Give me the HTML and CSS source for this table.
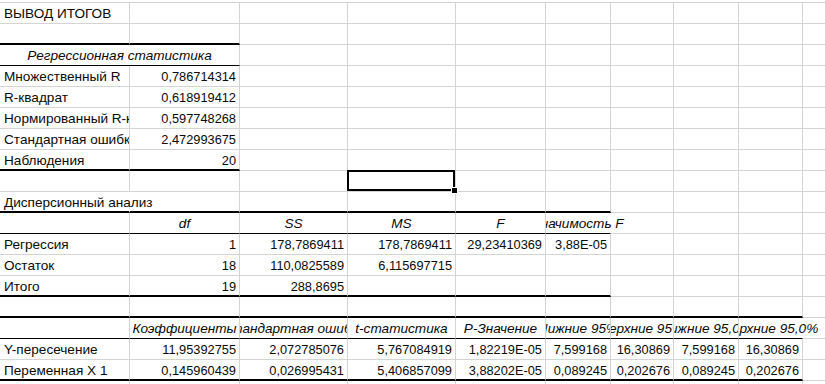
FILE: index.html
```html
<!DOCTYPE html>
<html lang="ru">
<head>
<meta charset="utf-8">
<title>Вывод итогов</title>
<link rel="stylesheet" href="styles.css">
</head>
<body>
<div class="sheet">
  <div class="row">
    <div class="c">ВЫВОД ИТОГОВ</div><div class="c"></div><div class="c"></div><div class="c"></div><div class="c"></div><div class="c"></div><div class="c"></div><div class="c"></div><div class="c"></div><div class="c"></div>
  </div>
  <div class="row">
    <div class="c tb"></div><div class="c tb"></div><div class="c"></div><div class="c"></div><div class="c"></div><div class="c"></div><div class="c"></div><div class="c"></div><div class="c"></div><div class="c"></div>
  </div>
  <div class="row">
    <div class="c m i bb span2">Регрессионная статистика</div><div class="c"></div><div class="c"></div><div class="c"></div><div class="c"></div><div class="c"></div><div class="c"></div><div class="c"></div><div class="c"></div>
  </div>
  <div class="row">
    <div class="c">Множественный R</div><div class="c r">0,786714314</div><div class="c"></div><div class="c"></div><div class="c"></div><div class="c"></div><div class="c"></div><div class="c"></div><div class="c"></div><div class="c"></div>
  </div>
  <div class="row">
    <div class="c">R-квадрат</div><div class="c r">0,618919412</div><div class="c"></div><div class="c"></div><div class="c"></div><div class="c"></div><div class="c"></div><div class="c"></div><div class="c"></div><div class="c"></div>
  </div>
  <div class="row">
    <div class="c">Нормированный R-квадрат</div><div class="c r">0,597748268</div><div class="c"></div><div class="c"></div><div class="c"></div><div class="c"></div><div class="c"></div><div class="c"></div><div class="c"></div><div class="c"></div>
  </div>
  <div class="row">
    <div class="c">Стандартная ошибка</div><div class="c r">2,472993675</div><div class="c"></div><div class="c"></div><div class="c"></div><div class="c"></div><div class="c"></div><div class="c"></div><div class="c"></div><div class="c"></div>
  </div>
  <div class="row">
    <div class="c tb">Наблюдения</div><div class="c r tb">20</div><div class="c"></div><div class="c"></div><div class="c"></div><div class="c"></div><div class="c"></div><div class="c"></div><div class="c"></div><div class="c"></div>
  </div>
  <div class="row">
    <div class="c"></div><div class="c"></div><div class="c"></div><div class="c sel"></div><div class="c"></div><div class="c"></div><div class="c"></div><div class="c"></div><div class="c"></div><div class="c"></div>
  </div>
  <div class="row">
    <div class="c tb spill">Дисперсионный анализ</div><div class="c tb"></div><div class="c tb"></div><div class="c tb"></div><div class="c tb"></div><div class="c tb"></div><div class="c"></div><div class="c"></div><div class="c"></div><div class="c"></div>
  </div>
  <div class="row">
    <div class="c bb"></div><div class="c m i bb">df</div><div class="c m i bb">SS</div><div class="c m i bb">MS</div><div class="c m i bb">F</div><div class="c m i bb spill-c">Значимость F</div><div class="c"></div><div class="c"></div><div class="c"></div><div class="c"></div>
  </div>
  <div class="row">
    <div class="c">Регрессия</div><div class="c r">1</div><div class="c r">178,7869411</div><div class="c r">178,7869411</div><div class="c r">29,23410369</div><div class="c r">3,88E-05</div><div class="c"></div><div class="c"></div><div class="c"></div><div class="c"></div>
  </div>
  <div class="row">
    <div class="c">Остаток</div><div class="c r">18</div><div class="c r">110,0825589</div><div class="c r">6,115697715</div><div class="c"></div><div class="c"></div><div class="c"></div><div class="c"></div><div class="c"></div><div class="c"></div>
  </div>
  <div class="row">
    <div class="c tb">Итого</div><div class="c r tb">19</div><div class="c r tb">288,8695</div><div class="c tb"></div><div class="c tb"></div><div class="c tb"></div><div class="c"></div><div class="c"></div><div class="c"></div><div class="c"></div>
  </div>
  <div class="row">
    <div class="c tb"></div><div class="c tb"></div><div class="c tb"></div><div class="c tb"></div><div class="c tb"></div><div class="c tb"></div><div class="c tb"></div><div class="c tb"></div><div class="c tb"></div><div class="c"></div>
  </div>
  <div class="row">
    <div class="c bb"></div><div class="c m i bb">Коэффициенты</div><div class="c m i bb">Стандартная ошибка</div><div class="c m i bb">t-статистика</div><div class="c m i bb">P-Значение</div><div class="c m i bb">Нижние 95%</div><div class="c m i bb">Верхние 95%</div><div class="c m i bb">Нижние 95,0%</div><div class="c m i bb spill-c">Верхние 95,0%</div><div class="c"></div>
  </div>
  <div class="row">
    <div class="c">Y-пересечение</div><div class="c r">11,95392755</div><div class="c r">2,072785076</div><div class="c r">5,767084919</div><div class="c r">1,82219E-05</div><div class="c r">7,599168</div><div class="c r">16,30869</div><div class="c r">7,599168</div><div class="c r">16,30869</div><div class="c"></div>
  </div>
  <div class="row">
    <div class="c tb">Переменная X 1</div><div class="c r tb">0,145960439</div><div class="c r tb">0,026995431</div><div class="c r tb">5,406857099</div><div class="c r tb">3,88202E-05</div><div class="c r tb">0,089245</div><div class="c r tb">0,202676</div><div class="c r tb">0,089245</div><div class="c r tb">0,202676</div><div class="c"></div>
  </div>
  <div class="row">
    <div class="c"></div><div class="c"></div><div class="c"></div><div class="c"></div><div class="c"></div><div class="c"></div><div class="c"></div><div class="c"></div><div class="c"></div><div class="c"></div>
  </div>
</div>
</body>
</html>
```

FILE: styles.css
```css
html, body {
  margin: 0;
  padding: 0;
  background: #fff;
}

body {
  width: 825px;
  height: 384px;
  overflow: hidden;
  font-family: "Liberation Sans", Arial, sans-serif;
  font-size: 13.6px;
  color: #0a0a0a;
}

.sheet {
  margin-top: 2px;
  border-top: 1px solid #d4d4d4;
  width: 863px;
}

.row {
  display: grid;
  grid-template-columns: 130px 110px 108px 108px 90px 65px 63px 65px 64px 60px;
  height: 21px;
}

.c {
  box-sizing: border-box;
  min-width: 0;
  display: flex;
  align-items: flex-end;
  padding: 0 3px 2px 4px;
  line-height: 15px;
  white-space: nowrap;
  overflow: hidden;
  border-right: 1px solid #d4d4d4;
  border-bottom: 1px solid #d4d4d4;
}

.r {
  justify-content: flex-end;
  font-size: 12.8px;
}

.m {
  justify-content: center;
  padding-left: 2px;
  padding-right: 2px;
}

.i {
  font-style: italic;
}

.span2 {
  grid-column: span 2;
}

.bb {
  border-bottom-color: #000;
}

.tb {
  border-bottom: 2px solid #000;
  padding-bottom: 1px;
}

.spill {
  overflow: visible;
  border-right-color: transparent;
}

.spill-c {
  overflow: visible;
  border-right-color: transparent;
  clip-path: polygon(0 -5px, 300% -5px, 300% 150%, 0 150%);
}

.sel {
  position: relative;
  overflow: visible;
}

.sel::after {
  content: "";
  position: absolute;
  left: -1px;
  top: -1px;
  right: 0;
  bottom: 0;
  border: 2px solid #000;
}

.sel::before {
  content: "";
  position: absolute;
  right: -3px;
  bottom: -3px;
  width: 5px;
  height: 5px;
  background: #000;
  border: 1px solid #fff;
  z-index: 1;
}
```
